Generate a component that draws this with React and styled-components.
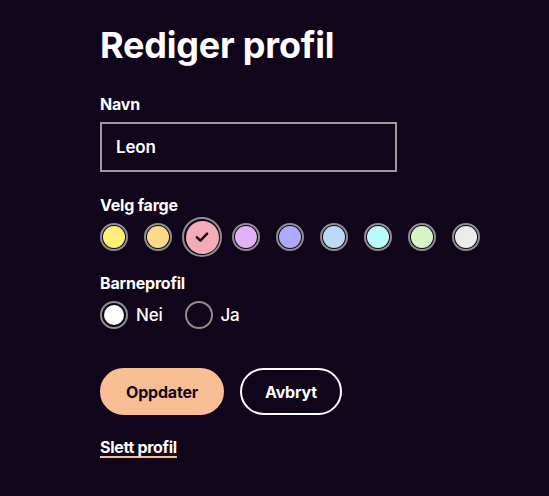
import React, { useState } from 'react';
import styled, { createGlobalStyle } from 'styled-components';

const GlobalStyle = createGlobalStyle`
  html, body {
    margin: 0;
    padding: 0;
    background: #10051a;
  }
  body {
    font-family: Inter, "Noto Sans", sans-serif;
    color: #ffffff;
  }
`;

const colors = [
  '#fff07c',
  '#ffd98a',
  '#f3abb7',
  '#e1b2fb',
  '#b0a9f9',
  '#bcdaf8',
  '#bafbfd',
  '#d5f5c5',
  '#ececec',
];

const Page = styled.div`
  min-height: 496px;
  padding: 23px 0 0 100px;
  box-sizing: border-box;
`;

const Title = styled.h1`
  margin: 0;
  font-size: 36px;
  line-height: 44px;
  font-weight: 700;
  letter-spacing: -0.2px;
`;

const Label = styled.div`
  font-size: 16px;
  line-height: 20px;
  font-weight: 700;
  letter-spacing: -0.2px;
  margin-top: ${(p) => p.$top}px;
`;

const Input = styled.input`
  display: block;
  box-sizing: border-box;
  width: 297px;
  height: 50px;
  margin-top: 8px;
  padding: 0 14px;
  background: transparent;
  border: 2px solid #9b9b9b;
  border-radius: 0;
  color: #ffffff;
  font-family: Inter, "Noto Sans", sans-serif;
  font-size: 17px;
  font-weight: 600;
  letter-spacing: -0.2px;
  outline: none;
`;

const SwatchRow = styled.div`
  display: flex;
  align-items: center;
  gap: 16px;
  height: 28px;
  margin-top: 8px;
`;

const Swatch = styled.button`
  box-sizing: border-box;
  flex: none;
  width: ${(p) => (p.$selected ? 40 : 28)}px;
  height: ${(p) => (p.$selected ? 40 : 28)}px;
  margin: 0 ${(p) => (p.$selected ? -6 : 0)}px;
  padding: ${(p) => (p.$selected ? 1.5 : 1)}px;
  border: 2px solid #8e8e8e;
  border-radius: 50%;
  background: transparent;
  cursor: pointer;
  display: flex;
`;

const SwatchFill = styled.span`
  flex: 1;
  border-radius: 50%;
  background: ${(p) => p.$color};
  display: flex;
  align-items: center;
  justify-content: center;
`;

const RadioRow = styled.div`
  display: flex;
  align-items: center;
  height: 28px;
  margin-top: 8px;
`;

const RadioOption = styled.label`
  display: flex;
  align-items: center;
  gap: 8px;
  margin-right: 22px;
  font-size: 17px;
  font-weight: 500;
  letter-spacing: -0.2px;
  cursor: pointer;
`;

const RadioCircle = styled.span`
  box-sizing: border-box;
  width: 28px;
  height: 28px;
  border: 2px solid #8e8e8e;
  border-radius: 50%;
  padding: 2px;
  display: flex;
`;

const RadioDot = styled.span`
  flex: 1;
  border-radius: 50%;
  background: ${(p) => (p.$on ? '#ffffff' : 'transparent')};
`;

const Actions = styled.div`
  display: flex;
  gap: 16px;
  margin-top: 39px;
`;

const Button = styled.button`
  box-sizing: border-box;
  height: 47px;
  padding: 0 ${(p) => (p.$primary ? 24 : 23)}px;
  border-radius: 24px;
  border: 2px solid ${(p) => (p.$primary ? '#f9bf94' : '#ffffff')};
  background: ${(p) => (p.$primary ? '#f9bf94' : 'transparent')};
  color: ${(p) => (p.$primary ? '#14071c' : '#ffffff')};
  font-family: Inter, "Noto Sans", sans-serif;
  font-size: 16px;
  font-weight: 700;
  letter-spacing: -0.2px;
  cursor: pointer;
`;

const DeleteLink = styled.a`
  display: inline-block;
  margin-top: 22px;
  font-size: 16px;
  line-height: 20px;
  font-weight: 700;
  letter-spacing: -0.3px;
  color: #ffffff;
  text-decoration: underline;
  text-decoration-color: #f9bf94;
  text-decoration-thickness: 2px;
  text-underline-offset: 3px;
  cursor: pointer;
`;

const Check = () => (
  <svg width="16" height="16" viewBox="0 0 14 14" fill="none">
    <path d="M2.5 7.2 L5.6 10.2 L11.5 4" stroke="#1c0c22" strokeWidth="2.2" strokeLinecap="round" strokeLinejoin="round" />
  </svg>
);

export default function App() {
  const [name, setName] = useState('Leon');
  const [color, setColor] = useState(2);
  const [child, setChild] = useState(false);

  return (
    <Page>
      <GlobalStyle />
      <Title>Rediger profil</Title>

      <Label $top={27}>Navn</Label>
      <Input value={name} onChange={(e) => setName(e.target.value)} />

      <Label $top={23}>Velg farge</Label>
      <SwatchRow>
        {colors.map((c, i) => (
          <Swatch key={c} $selected={i === color} onClick={() => setColor(i)}>
            <SwatchFill $color={c}>{i === color && <Check />}</SwatchFill>
          </Swatch>
        ))}
      </SwatchRow>

      <Label $top={22}>Barneprofil</Label>
      <RadioRow>
        <RadioOption onClick={() => setChild(false)}>
          <RadioCircle>
            <RadioDot $on={!child} />
          </RadioCircle>
          Nei
        </RadioOption>
        <RadioOption onClick={() => setChild(true)}>
          <RadioCircle>
            <RadioDot $on={child} />
          </RadioCircle>
          Ja
        </RadioOption>
      </RadioRow>

      <Actions>
        <Button $primary>Oppdater</Button>
        <Button>Avbryt</Button>
      </Actions>

      <DeleteLink>Slett profil</DeleteLink>
    </Page>
  );
}
